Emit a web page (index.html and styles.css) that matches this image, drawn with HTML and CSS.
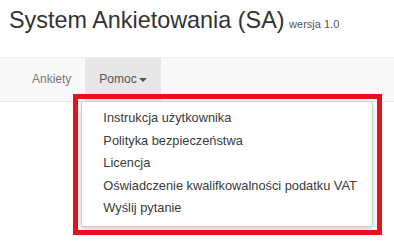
FILE: index.html
```html
<!DOCTYPE html>
<html lang="pl">
<head>
    <meta charset="UTF-8">
    <title>System Ankietowania (SA)</title>
    <link rel="stylesheet" href="styles.css">
</head>
<body>
    <div class="page-header">
        <h1>System Ankietowania (SA) <small>wersja 1.0</small></h1>
    </div>
    <nav class="navbar">
        <ul class="nav">
            <li><a href="#">Ankiety</a></li>
            <li class="dropdown open">
                <a href="#">Pomoc<span class="caret"></span></a>
                <ul class="dropdown-menu">
                    <li><a href="#">Instrukcja użytkownika</a></li>
                    <li><a href="#">Polityka bezpieczeństwa</a></li>
                    <li><a href="#">Licencja</a></li>
                    <li><a href="#">Oświadczenie kwalifkowalności podatku VAT</a></li>
                    <li><a href="#">Wyślij pytanie</a></li>
                </ul>
                <!-- czerwona ramka zaznaczenia -->
                <div class="highlight"></div>
            </li>
        </ul>
    </nav>
    <div class="content"></div>
</body>
</html>
```

FILE: styles.css
```css
body {
    margin: 0;
    font-family: "Liberation Sans", Arial, sans-serif;
    color: #333;
    background: #fff;
}
.page-header {
    height: 57px;
    padding-left: 9px;
}
.page-header h1 {
    margin: 0;
    padding-top: 8px;
    font-size: 23.4px;
    font-weight: normal;
    line-height: 24px;
}
.page-header small {
    margin-left: -2px;
    font-size: 11px;
    color: #555;
}
.navbar {
    height: 43px;
    background: #f8f8f8;
    border-top: 1px solid #ececec;
    border-bottom: 1px solid #e7e7e7;
}
.nav {
    display: flex;
    margin: 0;
    padding: 0 0 0 18px;
    list-style: none;
}
.nav > li {
    position: relative;
}
.nav > li > a {
    display: block;
    padding: 0 14px;
    line-height: 43px;
    font-size: 12px;
    color: #777;
    text-decoration: none;
}
.nav > li.open > a {
    background: #e7e7e7;
    color: #555;
}
.caret {
    display: inline-block;
    width: 0;
    height: 0;
    margin-left: 2px;
    vertical-align: middle;
    border-top: 4px solid #555;
    border-left: 4px solid transparent;
    border-right: 4px solid transparent;
}
.dropdown-menu {
    position: absolute;
    top: 43px;
    left: -4px;
    z-index: 2;
    width: 290px;
    margin: 0;
    padding: 5px 0 6px;
    list-style: none;
    background: #fff;
    border: 1px solid #ccc;
    box-shadow: 0 3px 7px rgba(0, 0, 0, 0.18);
}
.dropdown-menu a {
    display: block;
    padding: 0 21px;
    line-height: 22.5px;
    font-size: 12.8px;
    color: #3a3a3a;
    text-decoration: none;
    white-space: nowrap;
}
.highlight {
    position: absolute;
    top: 36px;
    left: -12px;
    z-index: 3;
    width: 299px;
    height: 131px;
    border: 5px solid #e3131e;
    pointer-events: none;
}
.content {
    height: 150px;
}
```
